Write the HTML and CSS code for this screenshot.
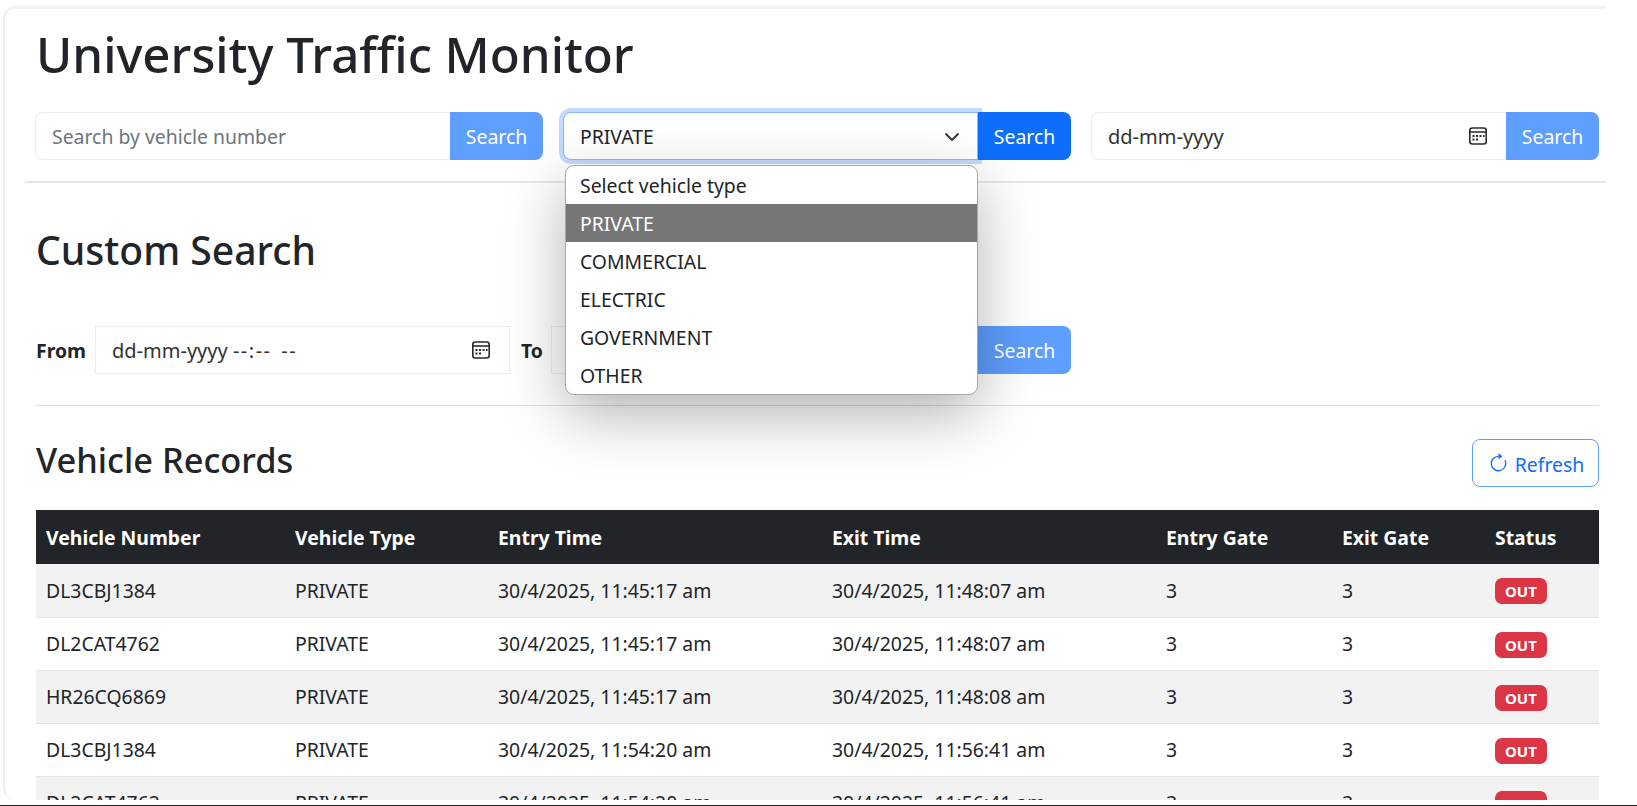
FILE: index.html
```html
<!DOCTYPE html>
<html lang="en">
<head>
  <meta charset="UTF-8">
  <title>University Traffic Monitor</title>
  <link rel="stylesheet" href="styles.css">
</head>
<body>
  <div class="card">
    <h1 class="title">University Traffic Monitor</h1>

    <div class="search-row">
      <div class="group">
        <div class="field placeholder"><span>Search by vehicle number</span></div>
        <button class="btn btn-faded" type="button">Search</button>
      </div>

      <div class="group group-select">
        <div class="field field-focus">
          <span>PRIVATE</span>
          <svg class="chevron" viewBox="0 0 16 16"><path fill="none" stroke="#343a40" stroke-linecap="round" stroke-linejoin="round" stroke-width="2" d="m2 5 6 6 6-6"/></svg>
        </div>
        <button class="btn" type="button">Search</button>
        <ul class="dropdown">
          <li>Select vehicle type</li>
          <li class="selected">PRIVATE</li>
          <li>COMMERCIAL</li>
          <li>ELECTRIC</li>
          <li>GOVERNMENT</li>
          <li>OTHER</li>
        </ul>
      </div>

      <div class="group">
        <div class="field">
          <span class="date-text">dd-mm-yyyy</span>
          <svg class="calendar" viewBox="0 0 20 20"><rect x="1.8" y="2" width="16.4" height="16" rx="2.5" fill="none" stroke="#2b2b2b" stroke-width="1.6"/><path d="M2 5.2h16v1.6H2z" fill="#2b2b2b"/><path d="M8 9h2v2H8zM11.5 9h2v2h-2zM15 9h1.5v2H15zM4.5 9h2v2h-2zM4.5 12.5h2v2h-2zM8 12.5h2v2H8z" fill="#2b2b2b"/></svg>
        </div>
        <button class="btn btn-faded" type="button">Search</button>
      </div>
    </div>

    <h2 class="custom-title">Custom Search</h2>

    <div class="range-row">
      <label class="range-label">From</label>
      <div class="field field-square">
        <span class="date-text">dd-mm-yyyy <span class="time-dashes">--:-- --</span></span>
        <svg class="calendar" viewBox="0 0 20 20"><rect x="1.8" y="2" width="16.4" height="16" rx="2.5" fill="none" stroke="#2b2b2b" stroke-width="1.6"/><path d="M2 5.2h16v1.6H2z" fill="#2b2b2b"/><path d="M8 9h2v2H8zM11.5 9h2v2h-2zM15 9h1.5v2H15zM4.5 9h2v2h-2zM4.5 12.5h2v2h-2zM8 12.5h2v2H8z" fill="#2b2b2b"/></svg>
      </div>
      <label class="range-label range-label-to">To</label>
      <div class="field field-square"></div>
      <button class="btn btn-faded btn-range" type="button">Search</button>
    </div>

    <div class="records-head">
      <h2 class="records-title">Vehicle Records</h2>
      <button class="btn-refresh" type="button">
        <svg class="refresh-icon" viewBox="0 0 16 16" fill="currentColor"><path fill-rule="evenodd" d="M8 3a5 5 0 1 0 4.546 2.914.5.5 0 0 1 .908-.417A6 6 0 1 1 8 2z"/><path d="M8 4.466V.534a.25.25 0 0 1 .41-.192l2.36 1.966c.12.1.12.284 0 .384L8.41 4.658A.25.25 0 0 1 8 4.466"/></svg>
        <span class="refresh-text">Refresh</span>
      </button>
    </div>

    <table class="records">
      <thead>
        <tr>
          <th>Vehicle Number</th>
          <th>Vehicle Type</th>
          <th>Entry Time</th>
          <th>Exit Time</th>
          <th>Entry Gate</th>
          <th>Exit Gate</th>
          <th>Status</th>
        </tr>
      </thead>
      <tbody>
        <tr>
          <td>DL3CBJ1384</td><td>PRIVATE</td><td>30/4/2025, 11:45:17 am</td><td>30/4/2025, 11:48:07 am</td><td>3</td><td>3</td><td><span class="badge">OUT</span></td>
        </tr>
        <tr>
          <td>DL2CAT4762</td><td>PRIVATE</td><td>30/4/2025, 11:45:17 am</td><td>30/4/2025, 11:48:07 am</td><td>3</td><td>3</td><td><span class="badge">OUT</span></td>
        </tr>
        <tr>
          <td>HR26CQ6869</td><td>PRIVATE</td><td>30/4/2025, 11:45:17 am</td><td>30/4/2025, 11:48:08 am</td><td>3</td><td>3</td><td><span class="badge">OUT</span></td>
        </tr>
        <tr>
          <td>DL3CBJ1384</td><td>PRIVATE</td><td>30/4/2025, 11:54:20 am</td><td>30/4/2025, 11:56:41 am</td><td>3</td><td>3</td><td><span class="badge">OUT</span></td>
        </tr>
        <tr>
          <td>DL2CAT4762</td><td>PRIVATE</td><td>30/4/2025, 11:54:20 am</td><td>30/4/2025, 11:56:41 am</td><td>3</td><td>3</td><td><span class="badge">OUT</span></td>
        </tr>
      </tbody>
    </table>
  </div>
</body>
</html>
```

FILE: styles.css
```css
* {
  box-sizing: border-box;
}

body {
  margin: 0;
  height: 100vh;
  overflow: hidden;
  background-color: #fff;
  border-bottom: 1px solid #222;
  font-family: "Noto Sans", Arial, sans-serif;
  font-size: 19.4px;
  color: #212529;
}

.card {
  width: 1603px;
  height: 794px;
  margin: 6px 0 0 3px;
  padding: 0 7px 0 31px;
  border-top: 3px solid #f3f3f3;
  border-left: 2px solid #eeeeee;
  border-radius: 12px 0 0 12px;
  overflow: hidden;
}

.title {
  margin: 0;
  padding-top: 16px;
  font-size: 49.2px;
  font-weight: 500;
  line-height: 58px;
}

.search-row {
  display: flex;
  gap: 20px;
  margin: 29px -7px 0 -11px;
  padding: 0 7px 21px 10px;
  border-bottom: 2px solid #e6e7e9;
}

.group {
  position: relative;
  flex: 1;
  display: flex;
  height: 48px;
}

.field {
  flex: 1;
  display: flex;
  align-items: center;
  justify-content: space-between;
  padding: 1px 17px 0 16px;
  background-color: #fff;
  border: 1px solid #e9ecef;
  border-right: none;
  border-radius: 8px 0 0 8px;
}

.placeholder {
  color: #6c757d;
}

.date-text {
  font-size: 20px;
  color: #333;
}

.time-dashes {
  letter-spacing: 1.5px;
  word-spacing: 3px;
}

.field-focus {
  border: 1px solid #86b7fe;
  box-shadow: 0 0 0 4px rgba(13, 110, 253, 0.25);
}

.field-square {
  border: 1px solid #eeeeee;
  border-radius: 0;
}

.chevron {
  width: 16px;
  height: 16px;
}

.calendar {
  width: 20px;
  height: 20px;
  margin: -2px 1px 0 0;
}

.btn {
  position: relative;
  width: 93px;
  flex: none;
  padding: 1px 0 0;
  background-color: #0d6efd;
  border: none;
  border-radius: 0 8px 8px 0;
  color: #fff;
  font: inherit;
}

.btn-faded {
  background-color: #5e9efe;
}

.dropdown {
  position: absolute;
  top: 53px;
  left: 2px;
  z-index: 5;
  width: 413px;
  margin: 0;
  padding: 0;
  list-style: none;
  background-color: #fff;
  border: 1px solid #a8a8a8;
  border-radius: 9px;
  box-shadow: 0 20px 60px rgba(0, 0, 0, 0.3);
  overflow: hidden;
}

.dropdown li {
  height: 38px;
  padding: 1px 0 0 14px;
  line-height: 37px;
}

.dropdown .selected {
  background-color: #767676;
  color: #fff;
}

.custom-title {
  margin: 43px 0 0;
  font-size: 39.1px;
  font-weight: 500;
  line-height: 48px;
}

.range-row {
  display: grid;
  grid-template-columns: 59px 415px 41px 1fr 93px;
  align-items: stretch;
  width: 1035px;
  height: 48px;
  margin-top: 52px;
}

.range-label {
  align-self: center;
  font-weight: 700;
}

.range-label-to {
  padding-left: 11px;
}

.btn-range {
  width: auto;
  border-radius: 0 8px 8px 0;
}

.records-head {
  display: flex;
  align-items: center;
  justify-content: space-between;
  margin-top: 31px;
  padding-top: 33px;
  border-top: 1px solid #dcdde0;
}

.records-title {
  margin: 0;
  padding-bottom: 6px;
  font-size: 34.4px;
  font-weight: 500;
  line-height: 42px;
}

.btn-refresh {
  display: flex;
  align-items: center;
  justify-content: center;
  gap: 6px;
  width: 127px;
  height: 48px;
  padding: 0 0 0 1px;
  background-color: #fff;
  border: 1px solid #5e9efe;
  border-radius: 8px;
  color: #0d6efd;
  font: inherit;
}

.refresh-icon {
  width: 21px;
  height: 21px;
}

.refresh-text {
  padding-top: 2px;
}

.records {
  width: 100%;
  margin-top: 23px;
  border-collapse: collapse;
  table-layout: fixed;
}

.records th,
.records td {
  height: 53px;
  padding: 0 10px;
  text-align: left;
  vertical-align: middle;
}

.records th {
  height: 54px;
  padding-top: 1px;
  background-color: #212529;
  color: #fff;
  font-weight: 700;
}

.records td {
  border-bottom: 1px solid #e5e5e5;
}

.records tbody tr:nth-child(odd) td {
  background-color: #f2f2f2;
}

.records th:nth-child(1) { width: 249px; }
.records th:nth-child(2) { width: 203px; }
.records th:nth-child(3) { width: 334px; }
.records th:nth-child(4) { width: 334px; }
.records th:nth-child(5) { width: 176px; }
.records th:nth-child(6) { width: 153px; }

.badge {
  display: inline-block;
  padding: 0 10px;
  background-color: #dc3545;
  border-radius: 7px;
  color: #fff;
  font-size: 15px;
  font-weight: 700;
  line-height: 26px;
}
```
